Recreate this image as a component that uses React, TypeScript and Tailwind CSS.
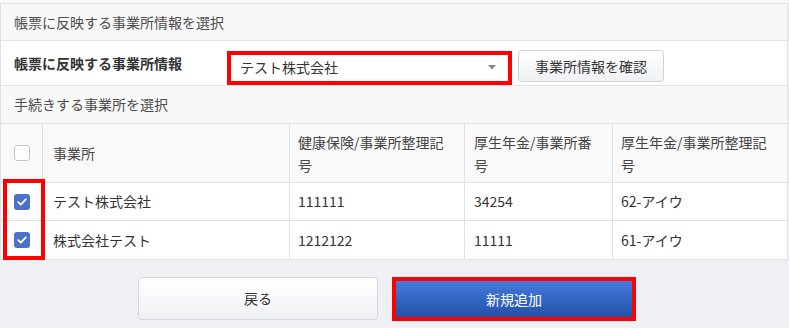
import React from "react";

const font = { fontFamily: '"Noto Sans CJK JP", "Noto Sans", sans-serif' };

function Check({ checked }: { checked: boolean }) {
  if (checked) {
    return (
      <div className="w-[16px] h-[16px] rounded-[3px] bg-[#4a72c8] flex items-center justify-center">
        <svg width="10" height="8" viewBox="0 0 10 8" fill="none">
          <path d="M1.2 4.2 L3.8 6.6 L8.8 1.4" stroke="white" strokeWidth="1.8" strokeLinecap="round" strokeLinejoin="round" />
        </svg>
      </div>
    );
  }
  return <div className="w-[16px] h-[16px] rounded-[3px] bg-white border border-[#c4c7cc]" />;
}

const rows = [
  { name: "テスト株式会社", a: "111111", b: "34254", c: "62-アイウ", h: "h-[38px]" },
  { name: "株式会社テスト", a: "1212122", b: "11111", c: "61-アイウ", h: "h-[39px]" },
];

export default function App() {
  return (
    <div className="w-[789px] h-[328px] bg-[#eef0f3] text-[14px] text-[#333]" style={font}>
      <div className="h-[3px] bg-[#f9f9f9]" />
      <div className="w-[788px] border-x border-t border-[#dfe1e5] bg-white">
        <div className="h-[37px] bg-[#f8f8f8] flex items-center pl-[13px] text-[#4d4d4d] border-b border-[#e3e5e8]">
          帳票に反映する事業所情報を選択
        </div>
        <div className="h-[45px] flex items-center border-b border-[#e3e5e8] bg-white">
          <div className="w-[226px] pl-[13px] font-bold text-[#333]">帳票に反映する事業所情報</div>
          <div className="w-[285px] h-[34px] mt-[9px] border-[4px] border-[#ff0000] bg-white flex items-center justify-between pl-[9px] pr-[12px]">
            <span className="text-[#333]">テスト株式会社</span>
            <svg width="8" height="5" viewBox="0 0 8 5">
              <path d="M0 0 L8 0 L4 4.5 Z" fill="#888" />
            </svg>
          </div>
          <div className="ml-[6px] w-[146px] h-[32px] mt-[6px] rounded-[4px] border border-[#cfd3d8] bg-gradient-to-b from-white to-[#f0f1f3] flex items-center justify-center text-[#333]">
            事業所情報を確認
          </div>
        </div>
        <div className="h-[37px] bg-[#f8f8f8] flex items-center pl-[13px] text-[#4d4d4d]">
          手続きする事業所を選択
        </div>
        <div className="relative">
          <div className="grid grid-cols-[41px_247px_175px_148px_175px] border-t border-[#dfe1e5]">
            <div className="h-[59px] bg-[#f9f9f9] flex items-center justify-center pl-[1px] border-b border-[#dfe1e5]">
              <Check checked={false} />
            </div>
            <div className="h-[59px] bg-[#f9f9f9] border-l border-b border-[#dfe1e5] flex items-center pl-[10px] text-[#444]">事業所</div>
            <div className="h-[59px] bg-[#f9f9f9] border-l border-b border-[#dfe1e5] pl-[8px] pt-[7px] leading-[23px] text-[#444]">
              健康保険/事業所整理記<br />号
            </div>
            <div className="h-[59px] bg-[#f9f9f9] border-l border-b border-[#dfe1e5] pl-[9px] pt-[7px] leading-[23px] text-[#444]">
              厚生年金/事業所番<br />号
            </div>
            <div className="h-[59px] bg-[#f9f9f9] border-l border-b border-[#dfe1e5] pl-[8px] pt-[7px] leading-[23px] text-[#444]">
              厚生年金/事業所整理記<br />号
            </div>
            {rows.map((r, i) => (
              <React.Fragment key={i}>
                <div className={`${r.h} flex items-center justify-center pl-[1px] border-b border-[#dfe1e5]`}>
                  <Check checked={true} />
                </div>
                <div className={`${r.h} border-l border-b border-[#dfe1e5] flex items-center pl-[10px]`}>{r.name}</div>
                <div className={`${r.h} border-l border-b border-[#dfe1e5] flex items-center pl-[8px]`}>{r.a}</div>
                <div className={`${r.h} border-l border-b border-[#dfe1e5] flex items-center pl-[9px]`}>{r.b}</div>
                <div className={`${r.h} border-l border-b border-[#dfe1e5] flex items-center pl-[8px]`}>{r.c}</div>
              </React.Fragment>
            ))}
          </div>
          <div className="absolute left-[2px] top-[56px] w-[42px] h-[81px] border-[4px] border-[#ff0000]" />
        </div>
      </div>
      <div className="flex pl-[138px] pt-[17px] gap-[14px]">
        <div className="w-[240px] h-[43px] rounded-[4px] border border-[#d3d6db] bg-gradient-to-b from-white to-[#f0f1f4] flex items-center justify-center text-[#333]">
          戻る
        </div>
        <div className="w-[244px] h-[44px] border-[4px] border-[#ff0000] bg-gradient-to-b from-[#467bdf] to-[#2251a7] flex items-center justify-center text-white">
          新規追加
        </div>
      </div>
    </div>
  );
}
